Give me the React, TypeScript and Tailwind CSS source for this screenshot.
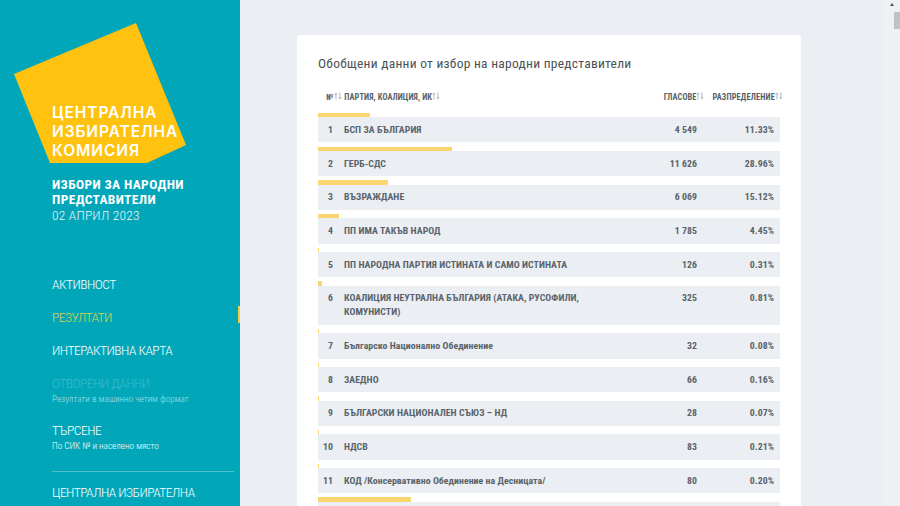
const rows: { n: number; name: string; votes: string; pct: string; w: number }[] = [
  { n: 1, name: "БСП ЗА БЪЛГАРИЯ", votes: "4 549", pct: "11.33%", w: 11.33 },
  { n: 2, name: "ГЕРБ-СДС", votes: "11 626", pct: "28.96%", w: 28.96 },
  { n: 3, name: "ВЪЗРАЖДАНЕ", votes: "6 069", pct: "15.12%", w: 15.12 },
  { n: 4, name: "ПП ИМА ТАКЪВ НАРОД", votes: "1 785", pct: "4.45%", w: 4.45 },
  { n: 5, name: "ПП НАРОДНА ПАРТИЯ ИСТИНАТА И САМО ИСТИНАТА", votes: "126", pct: "0.31%", w: 0.31 },
  { n: 6, name: "КОАЛИЦИЯ НЕУТРАЛНА БЪЛГАРИЯ (АТАКА, РУСОФИЛИ, КОМУНИСТИ)", votes: "325", pct: "0.81%", w: 0.81 },
  { n: 7, name: "Българско Национално Обединение", votes: "32", pct: "0.08%", w: 0.08 },
  { n: 8, name: "ЗАЕДНО", votes: "66", pct: "0.16%", w: 0.16 },
  { n: 9, name: "БЪЛГАРСКИ НАЦИОНАЛЕН СЪЮЗ – НД", votes: "28", pct: "0.07%", w: 0.07 },
  { n: 10, name: "НДСВ", votes: "83", pct: "0.21%", w: 0.21 },
  { n: 11, name: "КОД /Консервативно Обединение на Десницата/", votes: "80", pct: "0.20%", w: 0.2 },
];

function SortIcon() {
  return (
    <svg viewBox="0 0 9 8" className="mb-[3px] inline-block h-[8px] w-[8px] shrink-0" fill="none" stroke="#98a1a8" strokeWidth="0.85">
      <path d="M2.2 8V1M0.8 2.4 2.2 0.8 3.6 2.4" />
      <path d="M6.6 0V7M5.2 5.6 6.6 7.2 8 5.6" />
    </svg>
  );
}

function Row({ n, name, votes, pct, w }: { n: number; name: string; votes: string; pct: string; w: number }) {
  return (
    <div className="mb-[4.2px]">
      <div className="h-[4.3px] bg-[#fbd56f]" style={{ width: `${w}%`, minWidth: 1 }} />
      <div className="flex min-h-[25.2px] items-start bg-[#ebeef2] py-[5.6px] text-[9.8px] leading-[14px] font-bold tracking-[0.05px] text-[#5a646b]">
        <div className="w-[15px] shrink-0 text-right">{n}</div>
        <div className="ml-[11px] max-w-[245px] flex-1">{name}</div>
        <div className="ml-auto w-[96px] text-right">{votes}</div>
        <div className="w-[83px] pr-[6px] text-right">{pct}</div>
      </div>
    </div>
  );
}

export default function App() {
  return (
    <div className="flex h-[506px] w-[900px] overflow-hidden bg-[#ebeef2] font-['Roboto_Condensed','Liberation_Sans_Narrow',Roboto,sans-serif]">
      <aside className="relative flex w-[240px] shrink-0 flex-col bg-[#02a6b9] pt-[102.5px] pl-[52px]">
        <svg viewBox="0 0 240 170" className="absolute top-0 left-0 h-[170px] w-[240px]">
          <polygon points="14,74 136,23 186,145 147,163 50,163" fill="#ffc20e" />
        </svg>
        <div className="relative font-['Inter',sans-serif] text-[15.5px] leading-[19px] font-semibold tracking-[0.9px] text-white">
          <div>ЦЕНТРАЛНА</div>
          <div>ИЗБИРАТЕЛНА</div>
          <div>КОМИСИЯ</div>
        </div>
        <div className="mt-[17px] text-[13.5px] leading-[15.5px] text-white">
          <div className="font-bold tracking-[0.35px]">ИЗБОРИ ЗА НАРОДНИ</div>
          <div className="font-bold tracking-[0.35px]">ПРЕДСТАВИТЕЛИ</div>
          <div className="font-light tracking-[0.2px] text-[#e4f6f8]">02 АПРИЛ 2023</div>
        </div>
        <nav className="mt-[52px] flex shrink-0 flex-col gap-[15px]">
          <div className="text-[13.5px] leading-[18px] font-light tracking-[-0.5px] text-white">АКТИВНОСТ</div>
          <div className="text-[13.5px] leading-[18px] font-light tracking-[-0.5px] text-[#d9d64e]">РЕЗУЛТАТИ</div>
          <div className="text-[13.5px] leading-[18px] font-light tracking-[-0.5px] text-white">ИНТЕРАКТИВНА КАРТА</div>
          <div>
            <div className="text-[13.5px] leading-[18px] font-light tracking-[-0.5px] text-[#38bccb]">ОТВОРЕНИ ДАННИ</div>
            <div className="mb-[1px] text-[9.2px] leading-[13px] font-light text-[#a5e0e7]">Резултати в машинно четим формат</div>
          </div>
          <div>
            <div className="text-[13.5px] leading-[18px] font-light tracking-[-0.5px] text-white">ТЪРСЕНЕ</div>
            <div className="mb-[1px] text-[9.2px] leading-[13px] font-light text-white">По СИК № и населено място</div>
          </div>
        </nav>
        <div className="mt-[18px] mr-[6px] h-px shrink-0 bg-[#4fc0ce]" />
        <div className="mt-[10px] shrink-0 text-[13.5px] leading-[20px] font-light tracking-[-0.5px] text-white">ЦЕНТРАЛНА ИЗБИРАТЕЛНА КОМИСИЯ</div>
        <div className="absolute top-[306px] right-0 h-[17px] w-[2px] bg-[#f4d03f]" />
      </aside>

      <main className="min-w-0 flex-1 pt-[35px] pl-[57px]">
        <div className="w-[504px] rounded-[4px] bg-white px-[21px] pt-[19px] pb-[20px]">
          <h1 className="text-[13.5px] leading-[18px] tracking-[0.26px] text-[#4a5157]">Обобщени данни от избор на народни представители</h1>
          <div className="mt-[18px] flex h-[14px] w-[465px] items-center text-[8.3px] font-bold tracking-[0.1px] text-[#565f66]">
            <div className="mr-[1px] ml-[8px]">№</div>
            <SortIcon />
            <div className="ml-[2px]">ПАРТИЯ, КОАЛИЦИЯ, ИК</div>
            <SortIcon />
            <div className="ml-auto">ГЛАСОВЕ</div>
            <SortIcon />
            <div className="ml-[8px] tracking-[0.18px]">РАЗПРЕДЕЛЕНИЕ</div>
            <SortIcon />
          </div>
          <div className="mt-[9px] w-[462px]">
            {rows.map((r) => (
              <Row key={r.n} {...r} />
            ))}
            <div className="h-[4.3px] w-[20.1%] bg-[#fbd56f]" />
            <div className="h-[25px] bg-[#ebeef2]" />
          </div>
        </div>
      </main>

      <div className="flex w-[17px] shrink-0 flex-col items-center bg-[#eef0f3]">
        <div className="mt-[3px] h-0 w-0 border-x-[2px] border-b-[3px] border-x-transparent border-b-[#555]" />
        <div className="mt-[6px] ml-[10px] h-[17px] w-[6px] bg-[#bfc2c5]" />
      </div>
    </div>
  );
}
